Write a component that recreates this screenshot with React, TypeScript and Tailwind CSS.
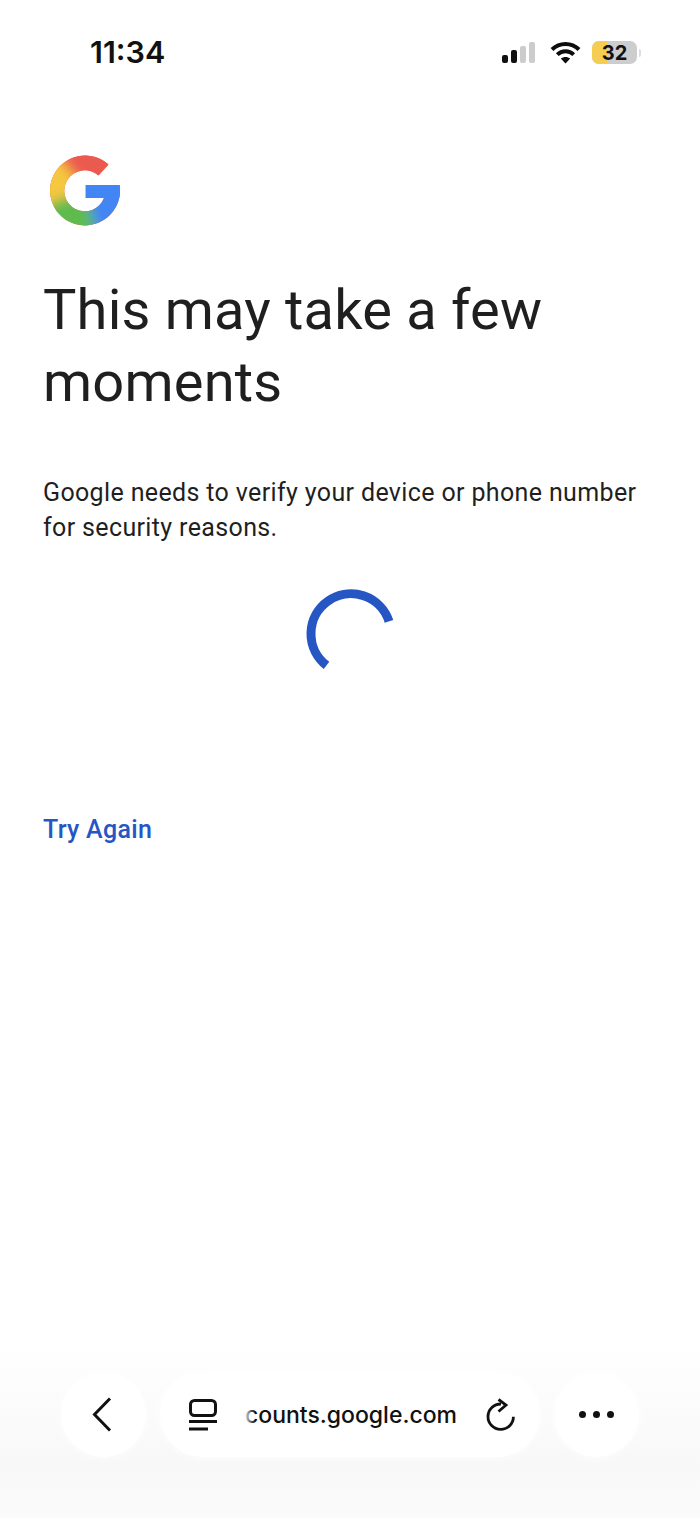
const sans = "font-['Roboto',sans-serif]";

function Signal() {
  return (
    <div className="flex items-end gap-[3px]">
      <div className="h-[8px] w-[6px] rounded-[2px] bg-[#111]" />
      <div className="h-[13px] w-[6px] rounded-[2px] bg-[#111]" />
      <div className="h-[17px] w-[6px] rounded-[2px] bg-[#ccc]" />
      <div className="h-[21px] w-[6px] rounded-[2px] bg-[#ccc]" />
    </div>
  );
}

function Wifi() {
  return (
    <svg width="31" height="23" viewBox="0 0 31 23" fill="none" stroke="#0c0c0c" strokeWidth="4">
      <path d="M2 8.5C9.6 1 21.4 1 29 8.5" />
      <path d="M7.3 13.6C11.9 9.2 19.1 9.2 23.7 13.6" />
      <path d="M15.5 22.5L10.8 17.6C13.4 15.3 17.6 15.3 20.2 17.6Z" fill="#0c0c0c" stroke="none" />
    </svg>
  );
}

function Battery() {
  return (
    <div className="flex items-center gap-[2px]">
      <div className="relative h-[23px] w-[45px] overflow-hidden rounded-[7px] bg-[#cdcdcd]">
        <div className="h-full w-[15px] bg-[#f5cd50]" />
        <span className="absolute inset-0 flex items-center justify-center font-['Inter',sans-serif] text-[20px] leading-none font-bold text-[#111]">
          32
        </span>
      </div>
      <div className="h-[8px] w-[2px] rounded-r-full bg-[#ddd]" />
    </div>
  );
}

function GoogleLogo() {
  const g =
    "M59.5 10.5A35 35 0 1 0 70.6 31L36.7 31L36.7 44L55 44A20.5 20.5 0 1 1 49.5 21.5Z";
  return (
    <svg width="72" height="73" viewBox="0 0 72 73">
      <defs>
        <clipPath id="g-shape">
          <path d={g} />
        </clipPath>
        <filter id="g-blur" x="-30%" y="-30%" width="160%" height="160%">
          <feGaussianBlur stdDeviation="6" />
        </filter>
      </defs>
      <g clipPath="url(#g-shape)">
        <rect width="72" height="73" fill="#ea5a4f" />
        <g filter="url(#g-blur)">
          <path d="M36 36L4 -6L70 -20L75 10Z" fill="#eb5a50" />
          <path d="M36 36L6 -2L-24 10L-20 60L4 56Z" fill="#f5c83f" />
          <path d="M36 36L-6 52L8 90L58 90Z" fill="#5fbb4e" />
          <path d="M36 36L52 90L90 80L90 30Z" fill="#4285f4" />
        </g>
        <path d="M36.7 31H72V44H36.7Z" fill="#4285f4" />
      </g>
    </svg>
  );
}

function Spinner() {
  return (
    <svg width="96" height="96" viewBox="0 0 96 96" fill="none">
      <path d="M24.5 80.4A40 40 0 1 1 87 36.3" stroke="#2556c4" strokeWidth="9" />
    </svg>
  );
}

function TabIcon() {
  return (
    <svg width="30" height="33" viewBox="0 0 30 33" fill="none" stroke="#111" strokeWidth="3">
      <rect x="2.5" y="2.5" width="25" height="15" rx="4" />
      <path d="M1 23.5H29" />
      <path d="M1 31H20" />
    </svg>
  );
}

function ReloadIcon() {
  return (
    <svg width="30" height="34" viewBox="0 0 30 34" fill="none" stroke="#111" strokeWidth="2.8">
      <path d="M16 6A12.7 12.7 0 1 0 28.4 18.7" />
      <path d="M13.5 1.5L21 7L13.5 13.5" />
    </svg>
  );
}

export default function App() {
  return (
    <div className={`flex h-[1518px] w-[700px] flex-col overflow-hidden bg-white ${sans}`}>
      {/* Status bar */}
      <div className="flex h-[104px] items-start justify-between pt-[36px] pr-[59px] pl-[90px]">
        <span className="font-['Inter',sans-serif] text-[30.5px] leading-[32px] font-semibold text-[#111]">
          11:34
        </span>
        <div className="flex items-center pt-[5px]">
          <Signal />
          <div className="mr-[11px] ml-[15px]">
            <Wifi />
          </div>
          <Battery />
        </div>
      </div>

      {/* Content */}
      <div className="flex flex-1 flex-col px-[43px]">
        <div className="mt-[50px] ml-[6px]">
          <GoogleLogo />
        </div>
        <h1 className="mt-[47px] text-[56px] leading-[72px] font-normal tracking-[0.2px] text-[#1f1f1f]">
          This may take a few moments
        </h1>
        <p className="mt-[57px] max-w-[600px] text-[25px] leading-[35px] tracking-[0.36px] text-[#1f1f1f]">
          Google needs to verify your device or phone number for security reasons.
        </p>
        <div className="mt-[40px] flex justify-center">
          <Spinner />
        </div>
        <a className="mt-[131px] text-[25px] leading-[35px] font-medium tracking-[0.3px] text-[#2556c4]">
          Try Again
        </a>
      </div>

      {/* Browser toolbar */}
      <div className="flex h-[178px] items-start justify-center gap-[14px] bg-gradient-to-b from-white via-[#f8f8f8] via-70% to-[#fbfbfb] pt-[32px]">
        <button className="flex h-[85px] w-[85px] items-center justify-center rounded-full bg-white pr-[4px] shadow-[0_0_10px_rgba(255,255,255,0.9)]">
          <svg width="20" height="35" viewBox="0 0 20 35" fill="none" stroke="#111" strokeWidth="3">
            <path d="M18 1.5L2.5 17.5L18 33.5" />
          </svg>
        </button>
        <div className="flex h-[85px] w-[380px] items-center rounded-full bg-white pr-[25px] pl-[28px] shadow-[0_0_10px_rgba(255,255,255,0.9)]">
          <TabIcon />
          <div className="relative ml-[25px] flex w-[214px] justify-end overflow-hidden">
            <span className="font-['Inter',sans-serif] text-[23px] leading-[30px] font-medium whitespace-nowrap text-[#111]">
              accounts.google.com
            </span>
            <div className="absolute inset-y-0 left-0 w-[12px] bg-gradient-to-r from-white to-white/0" />
          </div>
          <div className="ml-auto">
            <ReloadIcon />
          </div>
        </div>
        <button className="flex h-[85px] w-[85px] items-center justify-center gap-[7px] rounded-full bg-white shadow-[0_0_10px_rgba(255,255,255,0.9)]">
          <span className="h-[7px] w-[7px] rounded-full bg-[#111]" />
          <span className="h-[7px] w-[7px] rounded-full bg-[#111]" />
          <span className="h-[7px] w-[7px] rounded-full bg-[#111]" />
        </button>
      </div>
    </div>
  );
}
